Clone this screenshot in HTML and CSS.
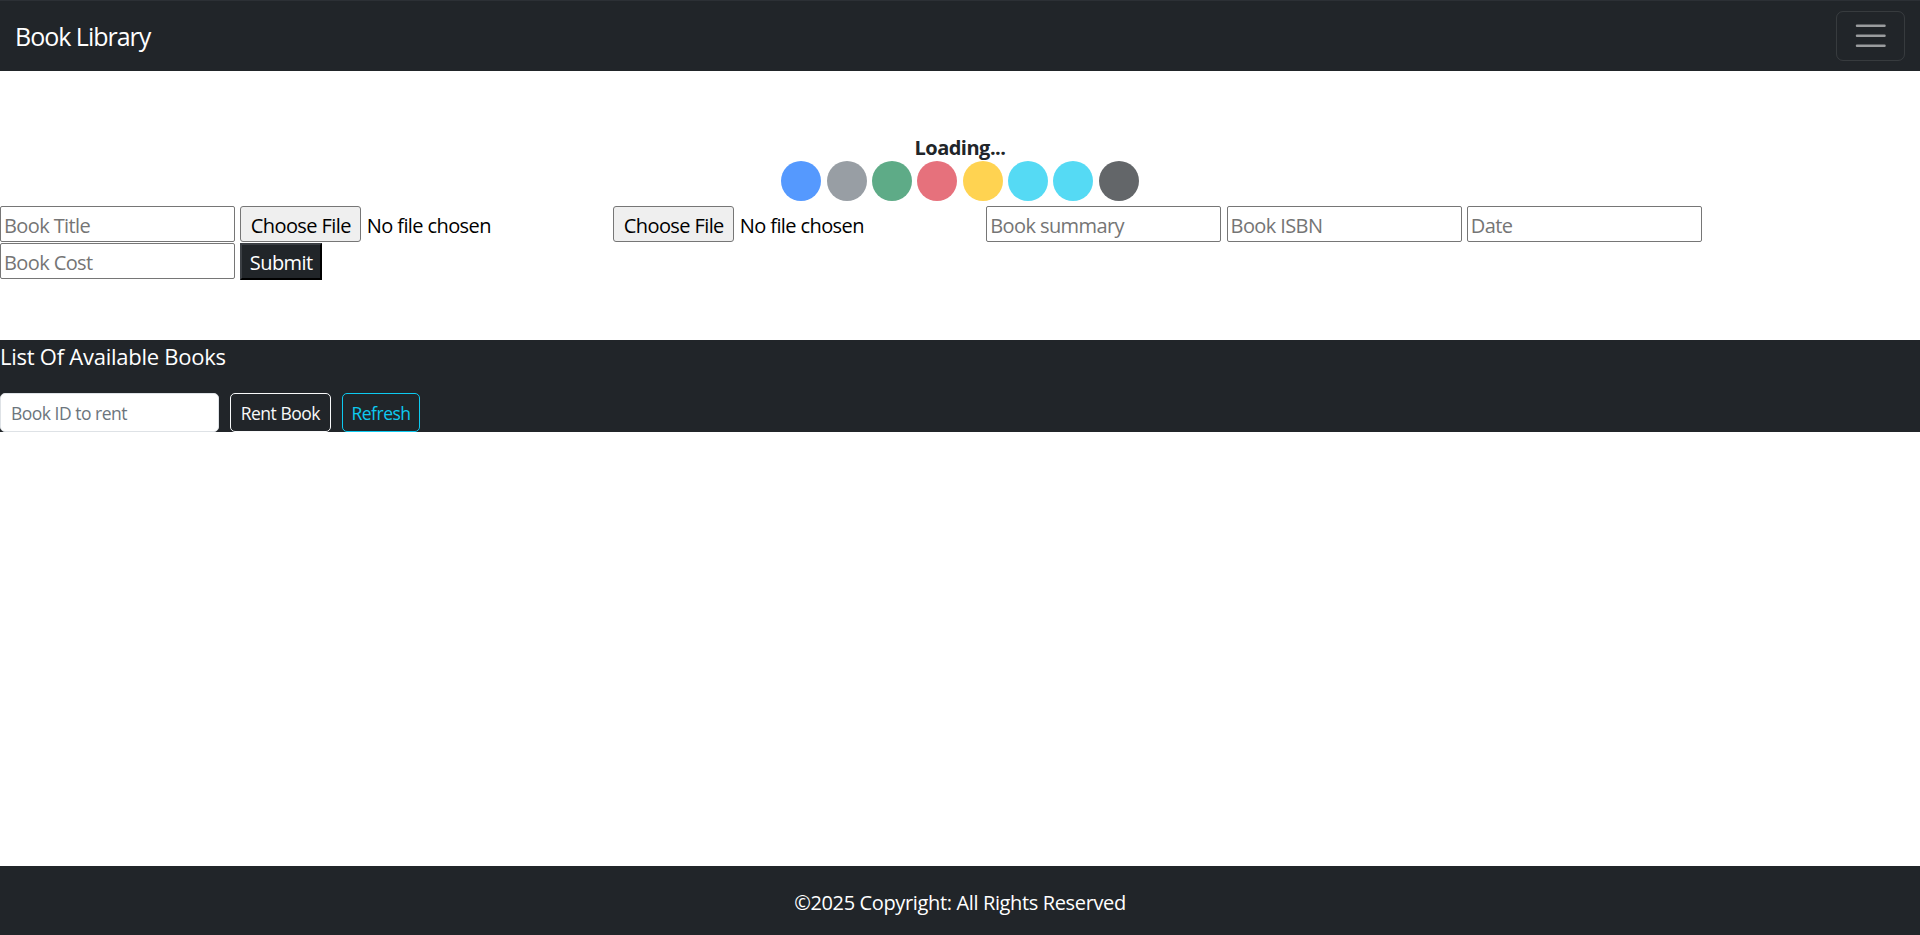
FILE: index.html
```html
<!DOCTYPE html>
<html lang="en">
<head>
<meta charset="utf-8">
<title>Book Library</title>
<link rel="stylesheet" href="styles.css">
</head>
<body>
<header class="navbar">
  <a class="brand" href="#">Book Library</a>
  <button class="toggler" type="button" aria-label="Toggle navigation">
    <svg class="toggler-icon" viewBox="0 0 30 30" width="37.5" height="37.5" aria-hidden="true">
      <path d="M4 7h22M4 15h22M4 23h22" stroke="rgba(255,255,255,0.55)" stroke-width="2" stroke-linecap="round" fill="none"/>
    </svg>
  </button>
</header>

<main class="main">
  <div class="loading">
    <div class="loading-label">Loading...</div>
    <div class="spinners">
      <span class="spinner sp-primary"></span>
      <span class="spinner sp-secondary"></span>
      <span class="spinner sp-success"></span>
      <span class="spinner sp-danger"></span>
      <span class="spinner sp-warning"></span>
      <span class="spinner sp-info"></span>
      <span class="spinner sp-info"></span>
      <span class="spinner sp-dark"></span>
    </div>
  </div>

  <form class="book-form">
    <input class="field" type="text" placeholder="Book Title">
    <div class="file-field"><button class="file-btn" type="button">Choose File</button><span class="file-name">No file chosen</span></div>
    <div class="file-field"><button class="file-btn" type="button">Choose File</button><span class="file-name">No file chosen</span></div>
    <input class="field" type="text" placeholder="Book summary">
    <input class="field" type="text" placeholder="Book ISBN">
    <input class="field" type="text" placeholder="Date">
    <input class="field" type="text" placeholder="Book Cost">
    <button class="submit-btn" type="button">Submit</button>
  </form>

  <section class="books">
    <h5 class="books-title">List Of Available Books</h5>
    <div class="rent-row">
      <input class="rent-input" type="text" placeholder="Book ID to rent">
      <button class="btn-sm btn-light" type="button">Rent Book</button>
      <button class="btn-sm btn-info" type="button">Refresh</button>
    </div>
  </section>
</main>

<footer class="footer">©2025 Copyright: All Rights Reserved</footer>
</body>
</html>
```

FILE: styles.css
```css
* { box-sizing: border-box; }

html, body { margin: 0; padding: 0; }

body {
  font-family: "Open Sans", "Noto Sans", sans-serif;
  font-size: 20px;
  line-height: 1.5;
  color: #212529;
  background: #fff;
  min-height: 935px;
}

/* navbar */
.navbar {
  display: flex;
  align-items: center;
  justify-content: space-between;
  height: 71px;
  padding: 10px 15px 10px 15px;
  background: #212529;
  border-top: 1px solid #2c3035;
}
.brand {
  color: #fff;
  text-decoration: none;
  font-size: 25px;
  line-height: 37.5px;
  padding-top: 2px;
  letter-spacing: -1px;
}
.toggler {
  width: 69.5px;
  height: 50px;
  padding: 5px 15px;
  background: transparent;
  border: 1px solid rgba(255, 255, 255, 0.1);
  border-radius: 7px;
  display: flex;
  align-items: center;
  justify-content: center;
}
.toggler-icon { display: block; }

/* loading */
.loading {
  margin-top: 60px;
  display: flex;
  flex-direction: column;
  align-items: center;
}
.loading-label {
  height: 30px;
  padding-top: 2px;
  font-weight: 700;
  font-size: 20px;
  line-height: 30px;
  letter-spacing: -0.5px;
}
.spinners {
  display: flex;
  gap: 5.4px;
  height: 45px;
}
.spinner {
  width: 40px;
  height: 40px;
  border-radius: 50%;
  opacity: 0.7;
}
.sp-primary { background: #0d6efd; }
.sp-secondary { background: #6c757d; }
.sp-success { background: #198754; }
.sp-danger { background: #dc3545; }
.sp-warning { background: #ffc107; }
.sp-info { background: #0dcaf0; }
.sp-dark { background: #212529; }

/* form */
.book-form {
  display: flex;
  flex-wrap: wrap;
  align-items: flex-start;
  column-gap: 5.3px;
  row-gap: 0.5px;
}
.field {
  width: 235px;
  height: 36px;
  padding: 3px 3px 0;
  border: 1px solid #767676;
  border-radius: 2px;
  font-family: inherit;
  font-size: 20px;
  letter-spacing: -0.6px;
  color: #000;
  background: #fff;
}
.field::placeholder { color: #757575; }
.file-field {
  width: 367.7px;
  height: 36px;
  display: flex;
  align-items: center;
  white-space: nowrap;
}
.file-btn {
  width: 121px;
  height: 36px;
  padding: 3px 7px 0;
  background: #efefef;
  border: 1px solid #767676;
  border-radius: 3px;
  font-family: inherit;
  font-size: 20px;
  letter-spacing: -0.6px;
  color: #000;
}
.file-name {
  margin-left: 5.5px;
  padding-top: 3px;
  font-size: 20px;
  letter-spacing: -0.6px;
  color: #000;
}
.submit-btn {
  width: 81.7px;
  height: 37.5px;
  padding: 3px 7px 0;
  background: #212529;
  color: #fff;
  border-width: 2px;
  border-style: solid;
  border-color: #3b3f44 #000 #000 #3b3f44;
  font-family: inherit;
  font-size: 20px;
  letter-spacing: -0.6px;
}

/* books */
.books {
  margin-top: 60px;
  background: #212529;
  color: #fff;
  padding-top: 3px;
}
.books-title {
  margin: 0 0 25px;
  padding-top: 1px;
  height: 25px;
  font-size: 22px;
  font-weight: 400;
  line-height: 25px;
  letter-spacing: -0.25px;
}
.rent-row {
  display: flex;
  align-items: flex-start;
  gap: 11px;
}
.rent-input {
  width: 219px;
  height: 38.75px;
  padding: 6px 10px 4px;
  border: 1px solid #dee2e6;
  border-radius: 5px;
  font-family: inherit;
  font-size: 17.5px;
  letter-spacing: -0.5px;
  color: #212529;
  background: #fff;
}
.rent-input::placeholder { color: #6c757d; }
.btn-sm {
  height: 38.75px;
  padding: 6px 0 4px;
  background: transparent;
  border-radius: 5px;
  font-family: inherit;
  font-size: 17.5px;
  line-height: 26px;
  letter-spacing: -0.5px;
  white-space: nowrap;
  text-align: center;
}
.btn-light { color: #f8f9fa; border: 1px solid #f8f9fa; width: 100.7px; }
.btn-info { color: #0dcaf0; border: 1px solid #0dcaf0; width: 78.7px; }

/* footer */
.footer {
  position: fixed;
  left: 0;
  right: 0;
  bottom: 0;
  height: 69px;
  padding: 22px 0 17px;
  background: #212529;
  color: #fff;
  text-align: center;
  font-size: 20px;
  line-height: 30px;
  letter-spacing: -0.36px;
}
```
